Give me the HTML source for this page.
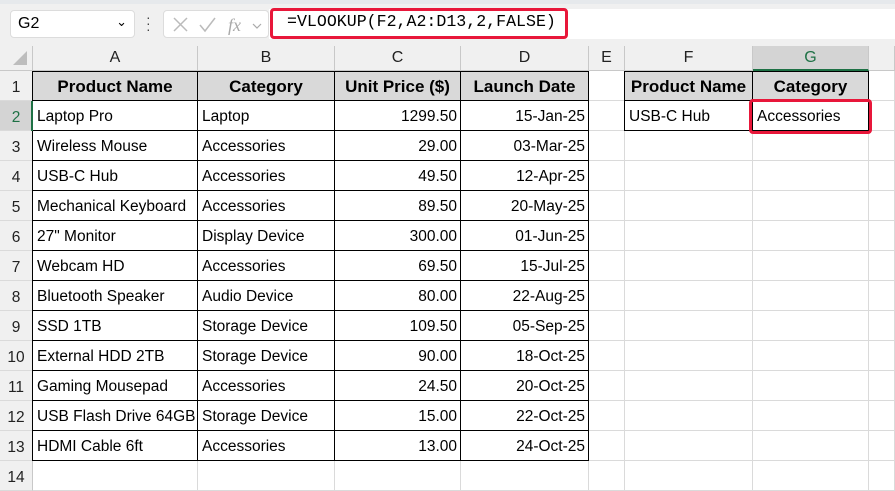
<!DOCTYPE html>
<html><head><meta charset="utf-8"><style>
*{margin:0;padding:0;box-sizing:border-box}
body{width:895px;height:490px;overflow:hidden;background:#fff;font-family:"Liberation Sans",sans-serif;position:relative}
.top{position:absolute;left:0;top:0;width:895px;height:46px;background:#f0f0f0;border-top:4px solid #e6e9ec}
.nb{position:absolute;left:10px;top:10px;width:125px;height:28px;background:#fff;border:1px solid #dcdcdc;border-radius:4px;font-size:16px;padding:4px 0 0 7px}
.fx{position:absolute;left:163px;top:10px;width:106px;height:28px;background:#fff;border:1px solid #dcdcdc;border-radius:4px;color:#bbb;font-size:18px}
.fb{position:absolute;left:269px;top:9px;width:626px;height:30px;background:#fff}
.red{position:absolute;border:3px solid #e8173a;border-radius:4px}
table{position:absolute;left:0;top:46px;width:895px;border-collapse:separate;border-spacing:0;table-layout:fixed}
td{border-right:1px solid #dadada;border-bottom:1px solid #dadada;height:30px;font-size:15.5px;white-space:nowrap;overflow:hidden;padding:2px 3px 0 4px;color:#000}
tr.h td{height:25px;background:#f0f0f0;text-align:center;font-size:16px;color:#222;border-bottom:1px solid #c8c8c8;border-right:1px solid #c8c8c8;padding:0}
td.r{background:#f0f0f0;text-align:center;border-right:1px solid #c8c8c8;border-bottom:1px solid #dadada;color:#222;padding:5px 0 0}
td.b{border-right:1px solid #000;border-bottom:1px solid #000}
td.g{background:#d9d9d9;font-weight:bold;text-align:center;font-size:17px;padding:2px 0 0}
td.n{text-align:right}
</style></head><body>
<div class="top"></div>
<div class="nb">G2<span style="position:absolute;right:7px;top:3px;font-size:13px">&#8964;</span></div>
<div style="position:absolute;left:146px;top:14px;width:3px;height:18px;color:#444;font-size:14px;line-height:6px">·<br>·<br>·</div>
<div class="fx"><svg width="106" height="28" style="position:absolute;left:0;top:0"><path d="M10 7l13 13M23 7L10 20" stroke="#bbb" stroke-width="1.5" fill="none"/><path d="M36 14l5 6 10-13" stroke="#bbb" stroke-width="1.5" fill="none"/><text x="64" y="20" font-family="Liberation Serif" font-style="italic" font-size="18" fill="#aaa">fx</text><path d="M89 13l4 4 4-4" stroke="#aaa" stroke-width="1.2" fill="none"/></svg></div>
<div class="fb"></div>
<div class="red" style="left:270px;top:8px;width:298px;height:31px"></div>
<div style="position:absolute;left:287px;top:12px;font-family:'Liberation Mono',monospace;font-size:16.6px">=VLOOKUP(F2,A2:D13,2,FALSE)</div>
<table>
<colgroup><col style="width:33px"><col style="width:165px"><col style="width:137px"><col style="width:126px"><col style="width:128px"><col style="width:36px"><col style="width:128px"><col style="width:116px"><col style="width:26px"></colgroup>
<tr class="h"><td style="position:relative"><svg width="20" height="20" style="position:absolute;right:3px;bottom:3px"><path d="M18 4V18H4Z" fill="#bdbdbd"/></svg></td><td>A</td><td>B</td><td>C</td><td>D</td><td>E</td><td>F</td><td style="background:#d4d4d4;color:#1e7145;border-bottom:2px solid #1e7145">G</td><td></td></tr>
<tr><td class="r">1</td><td class="b g">Product Name</td><td class="b g">Category</td><td class="b g">Unit Price ($)</td><td class="b g">Launch Date</td><td></td><td class="b g">Product Name</td><td class="b g">Category</td><td></td></tr>
<tr><td class="r" style="background:#d4d4d4;color:#1e7145">2</td><td class="b">Laptop Pro</td><td class="b">Laptop</td><td class="b n">1299.50</td><td class="b n">15-Jan-25</td><td></td><td class="b">USB-C Hub</td><td class="b">Accessories</td><td></td></tr>
<tr><td class="r">3</td><td class="b">Wireless Mouse</td><td class="b">Accessories</td><td class="b n">29.00</td><td class="b n">03-Mar-25</td><td></td><td></td><td></td><td></td></tr>
<tr><td class="r">4</td><td class="b">USB-C Hub</td><td class="b">Accessories</td><td class="b n">49.50</td><td class="b n">12-Apr-25</td><td></td><td></td><td></td><td></td></tr>
<tr><td class="r">5</td><td class="b">Mechanical Keyboard</td><td class="b">Accessories</td><td class="b n">89.50</td><td class="b n">20-May-25</td><td></td><td></td><td></td><td></td></tr>
<tr><td class="r">6</td><td class="b">27" Monitor</td><td class="b">Display Device</td><td class="b n">300.00</td><td class="b n">01-Jun-25</td><td></td><td></td><td></td><td></td></tr>
<tr><td class="r">7</td><td class="b">Webcam HD</td><td class="b">Accessories</td><td class="b n">69.50</td><td class="b n">15-Jul-25</td><td></td><td></td><td></td><td></td></tr>
<tr><td class="r">8</td><td class="b">Bluetooth Speaker</td><td class="b">Audio Device</td><td class="b n">80.00</td><td class="b n">22-Aug-25</td><td></td><td></td><td></td><td></td></tr>
<tr><td class="r">9</td><td class="b">SSD 1TB</td><td class="b">Storage Device</td><td class="b n">109.50</td><td class="b n">05-Sep-25</td><td></td><td></td><td></td><td></td></tr>
<tr><td class="r">10</td><td class="b">External HDD 2TB</td><td class="b">Storage Device</td><td class="b n">90.00</td><td class="b n">18-Oct-25</td><td></td><td></td><td></td><td></td></tr>
<tr><td class="r">11</td><td class="b">Gaming Mousepad</td><td class="b">Accessories</td><td class="b n">24.50</td><td class="b n">20-Oct-25</td><td></td><td></td><td></td><td></td></tr>
<tr><td class="r">12</td><td class="b">USB Flash Drive 64GB</td><td class="b">Storage Device</td><td class="b n">15.00</td><td class="b n">22-Oct-25</td><td></td><td></td><td></td><td></td></tr>
<tr><td class="r">13</td><td class="b">HDMI Cable 6ft</td><td class="b">Accessories</td><td class="b n">13.00</td><td class="b n">24-Oct-25</td><td></td><td></td><td></td><td></td></tr>
<tr><td class="r">14</td><td></td><td></td><td></td><td></td><td></td><td></td><td></td><td></td></tr>
</table>
<div style="position:absolute;left:32px;top:71px;width:1px;height:390px;background:#000"></div>
<div style="position:absolute;left:32px;top:71px;width:557px;height:1px;background:#000"></div>
<div style="position:absolute;left:624px;top:71px;width:1px;height:60px;background:#000"></div>
<div style="position:absolute;left:624px;top:71px;width:245px;height:1px;background:#000"></div>
<div style="position:absolute;left:31px;top:101px;width:2px;height:30px;background:#1e7145"></div>
<div class="red" style="left:749px;top:99px;width:123px;height:35px"></div>
</body></html>
